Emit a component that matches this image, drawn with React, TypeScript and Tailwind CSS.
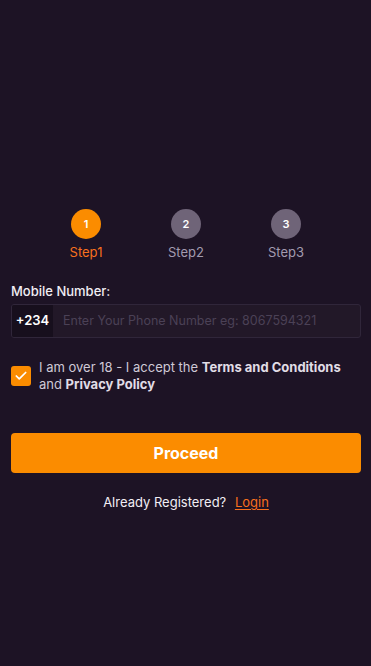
import { Check } from "lucide-react";

const steps = [
  { n: 1, label: "Step1", active: true },
  { n: 2, label: "Step2", active: false },
  { n: 3, label: "Step3", active: false },
];

export default function App() {
  return (
    <div
      className="min-h-[666px] w-full bg-[#1d1325] pl-[11px] pr-[10px] pt-[209px] text-white"
      style={{ fontFamily: "Inter, 'Noto Sans', sans-serif" }}
    >
      <div className="flex justify-center">
        {steps.map((s) => (
          <div key={s.n} className="flex w-[100px] flex-col items-center">
            <span
              className={
                "flex size-[30px] items-center justify-center rounded-full text-[11px] font-semibold " +
                (s.active ? "bg-[#fb8c00]" : "bg-[#6f6478]")
              }
            >
              {s.n}
            </span>
            <span
              className={
                "mt-[5px] text-[13px] leading-[16px] " +
                (s.active ? "text-[#f7701e]" : "text-[#a29bb0]")
              }
            >
              {s.label}
            </span>
          </div>
        ))}
      </div>

      <div className="mt-[23px] text-[13px] font-medium leading-[16px] text-[#f1eef4]">
        Mobile Number:
      </div>
      <div className="mt-[5px] flex h-[34px] overflow-hidden rounded-[3px] border border-[#30263a] bg-[#221828]">
        <span className="flex w-[41px] items-center justify-center bg-[#170f1d] text-[13px] font-semibold">
          +234
        </span>
        <input
          className="min-w-0 flex-1 bg-transparent px-[10px] text-[12.5px] text-white outline-none placeholder:text-[#4b4156]"
          placeholder="Enter Your Phone Number eg: 8067594321"
        />
      </div>

      <div className="mt-[21px] flex items-center gap-[8px]">
        <span className="flex size-[20px] shrink-0 items-center justify-center rounded-[3px] bg-[#fb8c00]">
          <Check className="size-[14px] text-white" strokeWidth={3} />
        </span>
        <p className="text-[13px] leading-[17px] text-[#cfc9d6]">
          I am over 18 - I accept the{" "}
          <b className="font-bold text-[#e1dde6]">Terms and Conditions</b> and{" "}
          <b className="font-bold text-[#e1dde6]">Privacy Policy</b>
        </p>
      </div>

      <button className="mt-[40px] flex h-[40px] w-full items-center justify-center rounded-[4px] bg-[#fb8c00] text-[16px] font-bold text-white">
        Proceed
      </button>

      <div className="mt-[21px] text-center text-[13px] leading-[16px] text-[#f1eef4]">
        Already Registered?{" "}
        <a className="ml-[5px] text-[#f7701e] underline underline-offset-2">Login</a>
      </div>
    </div>
  );
}
